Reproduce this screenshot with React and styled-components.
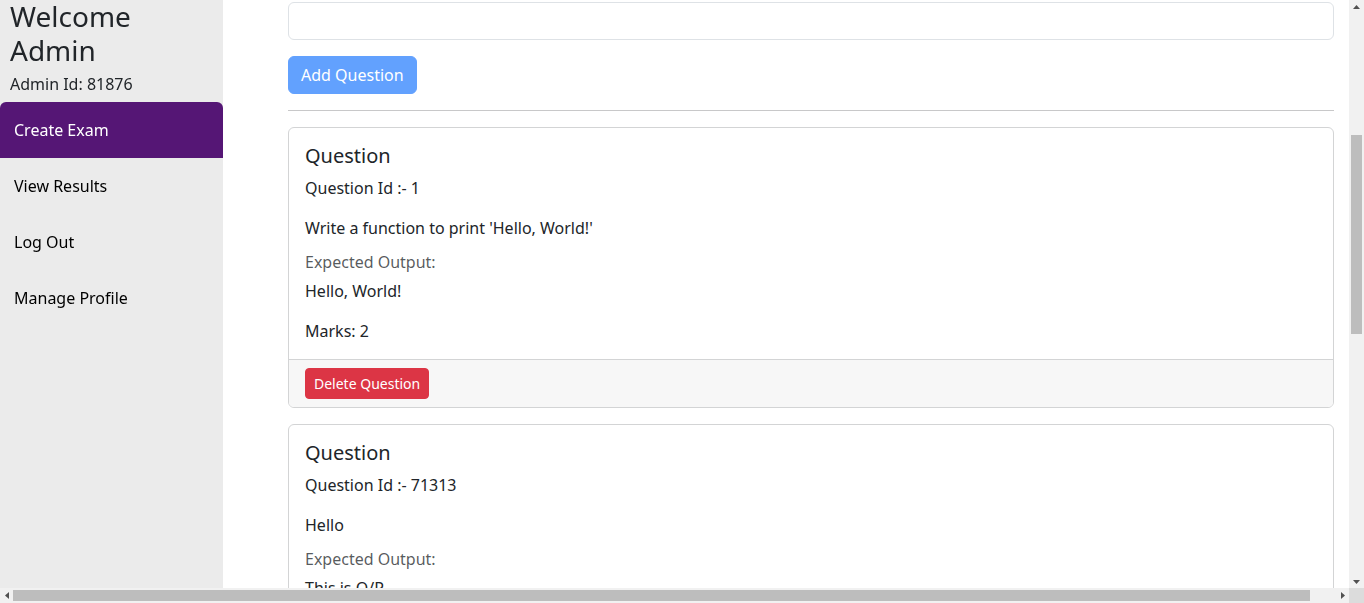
import React, { useLayoutEffect, useRef, useState } from "react";
import styled, { createGlobalStyle } from "styled-components";

const GlobalStyle = createGlobalStyle`
  html, body { height: 100%; }
  body {
    margin: 0;
    overflow: hidden;
    font-family: "Noto Sans", "Open Sans", sans-serif;
    font-size: 16px;
    line-height: 1.5;
    color: #212529;
    background: #fff;
  }
  *, *::before, *::after { box-sizing: border-box; }
`;

/* ---------- window frame with scrollbars ---------- */

const Frame = styled.div`
  display: grid;
  grid-template-columns: 1fr 15px;
  grid-template-rows: 1fr 15px;
  width: 100vw;
  height: 100vh;
`;

const Scroller = styled.div`
  overflow: hidden;
  min-width: 0;
  min-height: 0;
`;

const Bar = styled.div`
  display: flex;
  flex-direction: ${(p) => (p.$vertical ? "column" : "row")};
  background: #f1f1f1;
`;

const BarButton = styled.div`
  flex: 0 0 13px;
  display: flex;
  align-items: center;
  justify-content: center;
`;

const Track = styled.div`
  flex: 1;
  display: flex;
  flex-direction: ${(p) => (p.$vertical ? "column" : "row")};
  padding: ${(p) => (p.$vertical ? "0 2px" : "2px 0")};
`;

const Thumb = styled.div`
  flex: 0 0 auto;
  background: #bdbdbd;
`;

const Corner = styled.div`
  background: #dcdcdc;
`;

const Arrow = ({ dir }) => {
  const pts = {
    up: "0,4 7,4 3.5,0",
    down: "0,0 7,0 3.5,4",
    left: "4,0 4,7 0,3.5",
    right: "0,0 0,7 4,3.5",
  }[dir];
  const vertical = dir === "up" || dir === "down";
  return (
    <svg width={vertical ? 7 : 4} height={vertical ? 4 : 7} viewBox={vertical ? "0 0 7 4" : "0 0 4 7"}>
      <polygon points={pts} fill="#505050" />
    </svg>
  );
};

/* ---------- page ---------- */

const Layout = styled.div`
  display: flex;
  align-items: flex-start;
  width: 1376px;
`;

const Sidebar = styled.aside`
  position: sticky;
  top: 0;
  flex: 0 0 223px;
  height: calc(100vh - 15px);
  background: #ebebeb;
  display: flex;
  flex-direction: column;
`;

const Greeting = styled.h3`
  margin: 0 0 5px;
  padding: 0 10px;
  font-size: 28px;
  font-weight: 400;
  line-height: 1.2;
  color: #212529;
`;

const AdminId = styled.p`
  margin: 0 0 6px;
  padding: 0 10px;
`;

const Nav = styled.nav`
  display: flex;
  flex-direction: column;
`;

const NavLink = styled.a`
  display: block;
  padding: 16px 14px;
  line-height: 24px;
  text-decoration: none;
  cursor: pointer;
  color: ${(p) => (p.$active ? "#fff" : "#000")};
  background: ${(p) => (p.$active ? "#551675" : "transparent")};
  border-radius: 6px 6px 0 0;
`;

const Main = styled.main`
  flex: 0 0 1153px;
  padding: 25px 42px 0 65px;
`;

const FormTitle = styled.h4`
  margin: 0 0 8px;
  font-size: 24px;
  font-weight: 400;
  line-height: 1.2;
`;

const Label = styled.label`
  display: block;
  margin-bottom: ${(p) => p.$mb ?? 8}px;
  color: ${(p) => (p.$muted ? "rgba(33,37,41,0.75)" : "#212529")};
`;

const TextInput = styled.input`
  display: block;
  width: 100%;
  height: 38px;
  padding: 6px 12px;
  margin-bottom: 16px;
  font: inherit;
  color: #212529;
  background: #fff;
  border: 1px solid #dee2e6;
  border-radius: 6px;
  outline: none;
`;

const TextArea = styled.textarea`
  display: block;
  width: 100%;
  height: 86px;
  padding: 6px 12px;
  margin-bottom: 16px;
  font: inherit;
  color: #212529;
  background: #fff;
  border: 1px solid #dee2e6;
  border-radius: 6px;
  resize: vertical;
  outline: none;
`;

const Button = styled.button`
  display: inline-block;
  font-family: inherit;
  font-size: ${(p) => (p.$small ? "14px" : "16px")};
  line-height: ${(p) => (p.$small ? "21px" : "24px")};
  padding: ${(p) => (p.$small ? "4px 8px" : "6px 12px")};
  border-radius: ${(p) => (p.$small ? "4px" : "6px")};
  border: 1px solid ${(p) => p.$bg};
  color: #fff;
  background: ${(p) => p.$bg};
  cursor: pointer;
`;

const Divider = styled.hr`
  margin: 16px 0;
  border: 0;
  border-top: 1px solid #c8c8c9;
`;

const QuestionList = styled.div`
  display: flex;
  flex-direction: column;
  gap: 16px;
`;

const Card = styled.div`
  display: flex;
  flex-direction: column;
  background: #fff;
  border: 1px solid #d3d4d5;
  border-radius: 6px;
  overflow: hidden;
`;

const CardBody = styled.div`
  padding: 16px;
`;

const CardTitle = styled.h5`
  margin: 0 0 8px;
  font-size: 20px;
  font-weight: 400;
  line-height: 1.2;
`;

const CardText = styled.p`
  margin: 0 0 ${(p) => p.$mb ?? 16}px;
`;

const CardFooter = styled.div`
  padding: 8px 16px;
  background: #f7f7f7;
  border-top: 1px solid #d3d4d5;
`;

const questions = [
  { id: 1, text: "Write a function to print 'Hello, World!'", output: "Hello, World!", marks: 2 },
  { id: 71313, text: "Hello", output: "This is O/P", marks: 5 },
  { id: 52790, text: "Write a program to add two numbers", output: "Sum of the numbers", marks: 3 },
  { id: 90412, text: "Reverse a given string", output: "gnirts", marks: 4 },
];

export default function App() {
  const scroller = useRef(null);
  const anchor = useRef(null);
  const [thumbs, setThumbs] = useState({ vTop: 0, vLen: 0, hLeft: 0, hLen: 0 });

  useLayoutEffect(() => {
    const box = scroller.current;
    const el = anchor.current;
    if (!box || !el) return;
    const top =
      el.getBoundingClientRect().top - box.getBoundingClientRect().top + box.scrollTop;
    box.scrollTop = top - 2;

    const vTrack = box.clientHeight - 26;
    const hTrack = box.clientWidth - 26;
    const vLen = Math.max(18, (vTrack * box.clientHeight) / box.scrollHeight);
    const hLen = Math.max(18, (hTrack * box.clientWidth) / box.scrollWidth);
    const vMax = box.scrollHeight - box.clientHeight;
    const hMax = box.scrollWidth - box.clientWidth;
    setThumbs({
      vLen,
      vTop: vMax > 0 ? ((vTrack - vLen) * box.scrollTop) / vMax : 0,
      hLen,
      hLeft: hMax > 0 ? ((hTrack - hLen) * box.scrollLeft) / hMax : 0,
    });
  }, []);

  return (
    <>
      <GlobalStyle />
      <Frame>
        <Scroller ref={scroller}>
          <Layout>
            <Sidebar>
              <Greeting>Welcome Admin</Greeting>
              <AdminId>Admin Id: 81876</AdminId>
              <Nav>
                <NavLink $active>Create Exam</NavLink>
                <NavLink>View Results</NavLink>
                <NavLink>Log Out</NavLink>
                <NavLink>Manage Profile</NavLink>
              </Nav>
            </Sidebar>
            <Main>
              <FormTitle>Add Questions</FormTitle>
              <Label>Question</Label>
              <TextArea />
              <Label>Expected Output</Label>
              <TextArea />
              <Label>Marks</Label>
              <TextInput ref={anchor} />
              <Button $bg="#62a1fe">Add Question</Button>
              <Divider />
              <QuestionList>
                {questions.map((q) => (
                  <Card key={q.id}>
                    <CardBody>
                      <CardTitle>Question</CardTitle>
                      <CardText>Question Id :- {q.id}</CardText>
                      <CardText $mb={10}>{q.text}</CardText>
                      <Label $muted $mb={5}>Expected Output:</Label>
                      <CardText>{q.output}</CardText>
                      <CardText $mb={0}>Marks: {q.marks}</CardText>
                    </CardBody>
                    <CardFooter>
                      <Button $small $bg="#dc3545">Delete Question</Button>
                    </CardFooter>
                  </Card>
                ))}
              </QuestionList>
            </Main>
          </Layout>
        </Scroller>
        <Bar $vertical>
          <BarButton><Arrow dir="up" /></BarButton>
          <Track $vertical>
            <Thumb style={{ marginTop: thumbs.vTop, height: thumbs.vLen }} />
          </Track>
          <BarButton><Arrow dir="down" /></BarButton>
        </Bar>
        <Bar>
          <BarButton><Arrow dir="left" /></BarButton>
          <Track>
            <Thumb style={{ marginLeft: thumbs.hLeft, width: thumbs.hLen }} />
          </Track>
          <BarButton><Arrow dir="right" /></BarButton>
        </Bar>
        <Corner />
      </Frame>
    </>
  );
}
